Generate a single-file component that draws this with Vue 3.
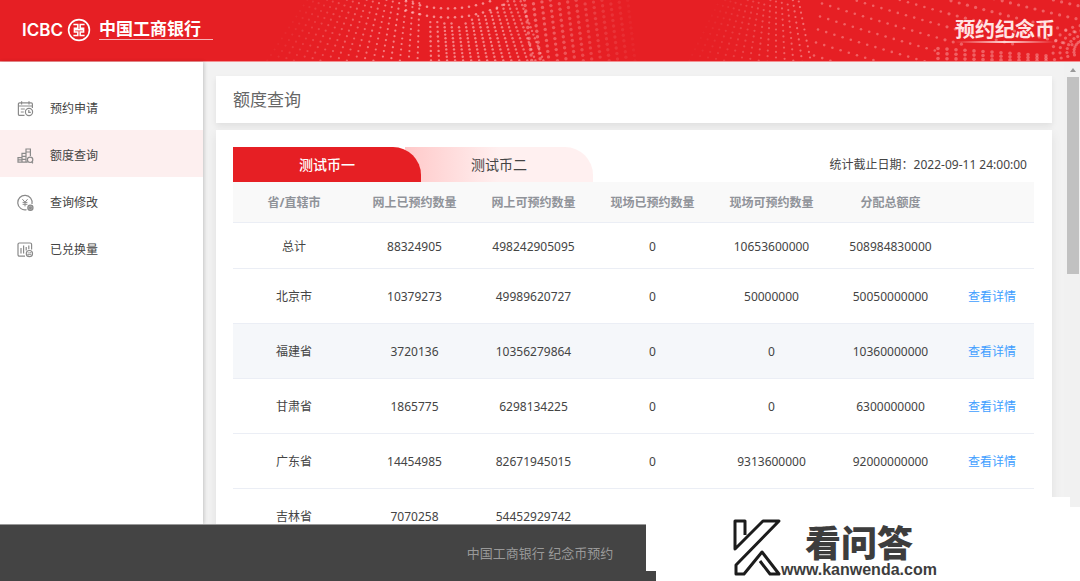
<script setup>
import { ref } from 'vue'

const menu = [
  { key: 'apply', label: '预约申请' },
  { key: 'quota', label: '额度查询' },
  { key: 'modify', label: '查询修改' },
  { key: 'exchanged', label: '已兑换量' },
]
const active = ref('quota')

const tabs = ['测试币一', '测试币二']
const currentTab = ref(0)

const columns = ['省/直辖市', '网上已预约数量', '网上可预约数量', '现场已预约数量', '现场可预约数量', '分配总额度']
const rows = [
  { cells: ['总计', '88324905', '498242905095', '0', '10653600000', '508984830000'] },
  { cells: ['北京市', '10379273', '49989620727', '0', '50000000', '50050000000'], link: true },
  { cells: ['福建省', '3720136', '10356279864', '0', '0', '10360000000'], link: true },
  { cells: ['甘肃省', '1865775', '6298134225', '0', '0', '6300000000'], link: true },
  { cells: ['广东省', '14454985', '82671945015', '0', '9313600000', '92000000000'], link: true },
  { cells: ['吉林省', '7070258', '54452929742', '', '', ''] },
]
const hovered = 2

// Halftone wave in the banner
function buildDots() {
  const dots = []
  const add = (x, y, r, o) => {
    if (y > -2 && y < 63 && o > 0.02) dots.push({ x: Math.round(x * 10) / 10, y: Math.round(y * 10) / 10, r, o: Math.round(o * 100) / 100 })
  }
  // left fan, leaning right
  for (let i = 0; i < 18; i++) {
    const xb = 268 + i * 8.8
    const lean = 0.66 - i * 0.037
    for (let j = 0; j < 13; j++) {
      const y = 61 - j * 5.5 + (i % 3) * 1.6
      add(xb + (60 - y) * lean, y, 1.1, Math.min(0.6, 0.06 + i * 0.04))
    }
  }
  // dense strands in the middle
  for (let i = 0; i < 15; i++) {
    const xb = 431 + i * 8
    const lean = 0.02 + i * 0.026
    const top = i < 4 ? 20 + i : Math.max(0, 25 - Math.max(0, i - 4) * 3)
    const step = i < 2 ? 4.8 : 3.7
    for (let y = 61; y > top; y -= step) {
      add(xb - (60 - y) * lean, y, 1.2, 0.6 - Math.max(0, i - 9) * 0.03)
    }
  }
  // hanging arcs above the strands
  for (let k = 0; k < 2; k++) {
    for (let i = -6; i < 9; i++) {
      add(448 + i * 7, 9 + k * 9 - i * i * 0.2, 1.3, 0.65)
    }
  }
  // right fading field
  for (let i = 0; i < 13; i++) {
    for (let j = -1; j < 16; j++) {
      const y = j * 5.5 - i * 1.8 + 6
      add(528 + i * 8.6 - (30 - y) * 0.12, y, 1.7, 0.46 - i * 0.034)
    }
  }
  // second wave, leading edge
  for (let i = 0; i < 15; i++) {
    for (let j = 0; j < 13; j++) {
      const y = 61 - j * 5.6 + (i % 4) * 1.3
      add(690 + i * 8.6 + (60 - y) * (0.5 - i * 0.05), y, 1.1, 0.04 + i * 0.032)
    }
  }
  // second wave, long falling rows
  for (let k = -5; k < 5; k++) {
    for (let i = 0; i < 33; i++) {
      const x = 822 + i * 8.2 - k * 2
      const y = k * 13 + 4 + i * 2.6 - i * i * 0.012
      if (x > 935 && y > 46) continue
      add(x, y, i > 14 ? 1.6 : 1.3, 0.4)
    }
  }
  // converging rows along the lower right
  for (let k = 0; k < 3; k++) {
    for (let i = 0; i < 13; i++) {
      add(938 + i * 9, 49 + k * 5 + i * (0.6 - k * 0.2), 1.8, 0.4)
    }
  }
  // rings at the right edge
  for (let k = 0; k < 4; k++) {
    for (let a = 0; a < 8; a++) {
      const t = Math.PI * (0.9 + a * 0.08)
      add(1084 + Math.cos(t) * (31 - k * 7), 52 + Math.sin(t) * (26 - k * 5), 1.6, 0.4)
    }
  }
  return dots
}
const dots = buildDots()
</script>

<template>
  <div class="page">
    <header class="banner">
      <svg class="wave" viewBox="0 0 1080 62" preserveAspectRatio="xMidYMid slice" aria-hidden="true">
        <circle v-for="(d, i) in dots" :key="i" :cx="d.x" :cy="d.y" :r="d.r" fill="#ffc4c4" :fill-opacity="d.o" />
      </svg>
      <div class="brand">
        <span class="brand-en">ICBC</span>
        <svg class="emblem" viewBox="0 0 24 24" aria-hidden="true">
          <g fill="none" stroke="#fff">
            <circle cx="12" cy="12" r="10.4" stroke-width="1.6" />
            <path d="M6.4 6.6h4.4v3.6H7.4v1.6h9.2v-1.6h-3.4V6.6h4.4M6.4 17.6h4.4V14H7.4v-2M17.6 17.6h-4.4V14h3.4v-2" stroke-width="1.5" />
          </g>
        </svg>
        <span class="brand-cn">中国工商银行</span>
      </div>
      <div class="slogan">预约纪念币</div>
    </header>

    <div class="body">
      <nav class="sidebar">
        <button v-for="m in menu" :key="m.key" type="button" class="menu-item" :class="{ active: active === m.key }" @click="active = m.key">
          <svg class="menu-icon" viewBox="0 0 18 18" fill="none" stroke="#8a8a8a" stroke-width="1.2" aria-hidden="true">
            <template v-if="m.key === 'apply'">
              <path d="M8.5 15.4H3.6a1.2 1.2 0 0 1-1.2-1.2V4a1.2 1.2 0 0 1 1.2-1.2h11.6A1.2 1.2 0 0 1 16.4 4v4M2.4 6h14M5.6 1.2v3.2M13 1.2v3.2M4.8 9h4M4.8 12h3" />
              <circle cx="13" cy="12" r="3.6" />
              <path d="M12.8 10v2.4h2" />
            </template>
            <template v-else-if="m.key === 'quota'">
              <path d="M2 15.2V10.6h4v4.6zM6 15.2V6.4h4v8.8zM10 12V2h4.4v7M2 12.9h4M6 9.4h4M6 12.3h4M10 5h4.4M10 15.2h1.6" />
              <circle cx="14.1" cy="12.8" r="2.7" />
              <path d="M15.6 15l1.4 1.2" />
            </template>
            <template v-else-if="m.key === 'modify'">
              <path d="M10.5 15.6A7.2 7.2 0 1 1 16 10" />
              <path d="M6.4 5.2L9 8.2l2.6-3M9 8.2v4.2M6.6 8.4h4.8M6.6 10.3h4.8" stroke-width="1" />
              <circle cx="14.4" cy="13.8" r="2.6" fill="#b5b5b5" />
              <circle cx="14.4" cy="13.8" r="0.8" />
            </template>
            <template v-else>
              <path d="M9 15.2H3.4A1.4 1.4 0 0 1 2 13.800V3.4A1.4 1.4 0 0 1 3.400 2h10.800a1.4 1.4 0 0 1 1.4 1.4v5M5 12.400V7M7.600 12.400V4.600M10.200 9.600V6M12.800 8.200V4.600" />
              <circle cx="13.4" cy="12.6" r="3.1" />
              <path d="M11.600 11.900h3.600l-1-1M15.200 13.500h-3.600l1 1" stroke-width="0.8" />
            </template>
          </svg>
          <span>{{ m.label }}</span>
        </button>
      </nav>

      <main class="content">
        <h1 class="title">额度查询</h1>
        <section class="panel">
          <div class="toolbar">
            <div class="tabs" role="tablist">
              <button v-for="(t, i) in tabs" :key="t" type="button" role="tab" class="tab" :class="{ on: currentTab === i }" :aria-selected="currentTab === i" @click="currentTab = i">{{ t }}</button>
            </div>
            <p class="deadline">统计截止日期：2022-09-11 24:00:00</p>
          </div>
          <table class="quota">
            <colgroup>
              <col class="col-name" />
              <col v-for="n in 5" :key="n" />
              <col class="col-action" />
            </colgroup>
            <thead>
              <tr>
                <th v-for="c in columns" :key="c" scope="col">{{ c }}</th>
                <td></td>
              </tr>
            </thead>
            <tbody>
              <tr v-for="(r, i) in rows" :key="r.cells[0]" :class="{ total: i === 0, hover: i === hovered }">
                <td v-for="(v, j) in r.cells" :key="j">{{ v }}</td>
                <td><a v-if="r.link" href="#">查看详情</a></td>
              </tr>
            </tbody>
          </table>
        </section>
      </main>

      <div class="scrollbar" aria-hidden="true">
        <span class="arrow"></span>
        <span class="thumb"></span>
      </div>
    </div>

    <footer class="footer">中国工商银行 纪念币预约</footer>

    <div class="stamp">
      <svg class="stamp-logo" viewBox="0 0 50 62" aria-hidden="true">
        <path d="M14 20V6H4v28L32 6h16L5 50v9h8L31 37l17 22H39L29 46" fill="none" stroke="#1c1c1c" stroke-width="3" stroke-linejoin="round" />
      </svg>
      <div class="stamp-text">
        <div class="stamp-name">看问答</div>
        <div class="stamp-url">www.kanwenda.com</div>
      </div>
    </div>
  </div>
</template>

<style>
body {
  margin: 0;
}
</style>

<style scoped>
.page {
  position: relative;
  display: flex;
  flex-direction: column;
  height: 100vh;
  overflow: hidden;
  background: #f2f2f2;
  color: #444;
  font: 12px/20px "Noto Sans", "Noto Sans CJK SC", sans-serif;
}
.page * {
  box-sizing: border-box;
}
button {
  border: 0;
  font: inherit;
  color: inherit;
  cursor: pointer;
}
.banner {
  position: relative;
  flex: none;
  display: flex;
  align-items: center;
  justify-content: space-between;
  height: 62px;
  padding: 0 25px 2px 22px;
  background: #e61f24;
  border-bottom: 1px solid #f28f91;
  color: #fff;
}
.wave {
  position: absolute;
  inset: 0;
  width: 100%;
  height: 100%;
}
.brand {
  position: relative;
  display: flex;
  align-items: center;
}
.brand-en {
  font: 600 17px/24px Inter, sans-serif;
}
.emblem {
  width: 24px;
  height: 24px;
  margin: 0 8px 0 4px;
}
.brand-cn {
  padding-right: 12px;
  border-bottom: 1px solid #f7b3b5;
  font-size: 17px;
  font-weight: 700;
  line-height: 20px;
}
.slogan {
  position: relative;
  font-size: 20px;
  font-weight: 700;
  line-height: 26px;
  color: #ffe3e3;
}
.slogan::after {
  content: "";
  position: absolute;
  left: 0;
  right: 0;
  bottom: 0;
  height: 2px;
  background: linear-gradient(90deg, transparent, #ffd5d5 50%, transparent);
}
.body {
  flex: 1;
  min-height: 0;
  display: flex;
}
.sidebar {
  position: relative;
  flex: none;
  width: 203px;
  padding-top: 21px;
  background: #fff;
  box-shadow: 1px 0 4px rgba(0, 0, 0, 0.2);
}
.menu-item {
  display: flex;
  align-items: center;
  gap: 16px;
  width: 100%;
  height: 47px;
  padding: 4px 16px 0;
  background: none;
}
.menu-item.active {
  background: #fdefef;
}
.menu-icon {
  width: 18px;
  height: 18px;
}
.content {
  flex: 1;
  min-width: 0;
  padding: 14px 12px 0 13px;
  overflow: hidden;
}
.title {
  margin: 0 0 7px;
  padding: 0 17px;
  background: #fff;
  box-shadow: 0 3px 6px rgba(0, 0, 0, 0.08);
  font-size: 17px;
  font-weight: 400;
  line-height: 47px;
  color: #666;
}
.panel {
  position: relative;
  padding: 17px 18px 17px 17px;
  background: #fff;
  box-shadow: 0 4px 10px rgba(0, 0, 0, 0.08);
}
.toolbar {
  display: flex;
  align-items: center;
  justify-content: space-between;
  padding-right: 7px;
}
.tabs {
  display: flex;
}
.tab {
  width: 188px;
  height: 35px;
  padding: 0;
  border-radius: 0 28px 0 0;
  background: linear-gradient(90deg, #ffc9c9, #fff0f0 50%);
  font-size: 14px;
}
.tab + .tab {
  margin-left: -16px;
}
.tab.on {
  position: relative;
  background: #e61f24;
  color: #fff;
  font-weight: 500;
}
.deadline {
  margin: 0;
}
.quota {
  width: 100%;
  table-layout: fixed;
  border-collapse: separate;
  border-spacing: 0;
  text-align: center;
}
.col-name {
  width: 122px;
}
.col-action {
  width: 84px;
}
.quota th,
.quota td {
  height: 55px;
  padding: 2px 0 0;
  border-bottom: 1px solid #ebeef5;
}
.quota thead th,
.quota thead td {
  height: 41px;
  background: #f9f9f9;
  color: #909399;
  font-weight: 700;
}
.quota .total td {
  height: 46px;
}
.quota .hover td {
  background: #f5f7fa;
}
.quota a {
  color: #409eff;
  text-decoration: none;
}
.scrollbar {
  flex: none;
  display: flex;
  flex-direction: column;
  align-items: center;
  gap: 5px;
  width: 16px;
  padding: 6px 0 0 1px;
  background: #f1f1f1;
}
.arrow {
  border: solid transparent;
  border-width: 0 3px 4px;
  border-bottom-color: #999;
}
.thumb {
  width: 12px;
  height: 197px;
  background: #c1c1c1;
}
.footer {
  position: relative;
  flex: none;
  background: #444;
  color: #999;
  font-size: 13px;
  line-height: 56px;
  text-align: center;
  border-top: 1px solid #999;
}
.stamp {
  position: absolute;
  right: 10px;
  bottom: 10px;
  display: flex;
  width: 424px;
  height: 74px;
  padding: 18px 0 0 85px;
  background: #fff;
  box-shadow: 10px 10px 0 #fff;
  color: #3d3d3d;
}
.stamp-logo {
  flex: none;
  width: 50px;
  height: 62px;
}
.stamp-name {
  padding: 6px 0 0 24px;
  font: 900 36px/40px "Noto Sans CJK SC", sans-serif;
}
.stamp-url {
  font: 700 16px/18px "Liberation Sans", sans-serif;
}
</style>
